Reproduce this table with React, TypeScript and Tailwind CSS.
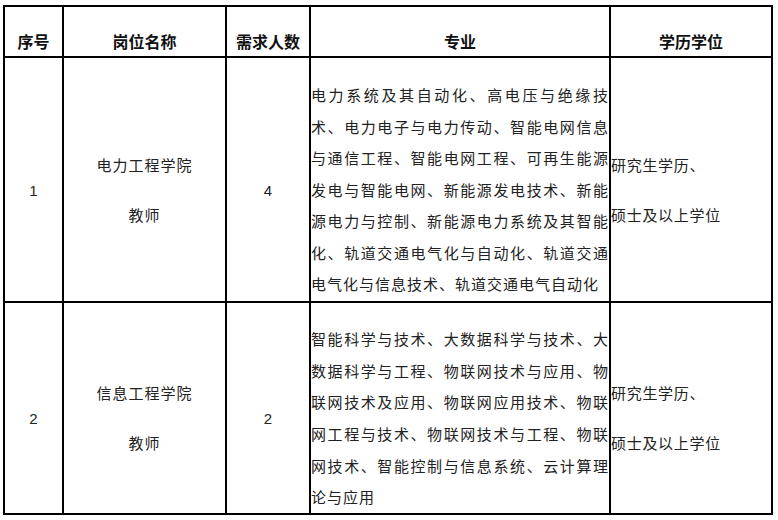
import { Fragment } from "react";

const FONT = "font-['Liberation_Sans','Noto_Sans_CJK_SC',sans-serif]";

const headers = ["序号", "岗位名称", "需求人数", "专业", "学历学位"];

const rows = [
  {
    no: "1",
    dept: "电力工程学院",
    count: "4",
    major: [
      "电力系统及其自动化、高电压与绝缘技",
      "术、电力电子与电力传动、智能电网信息",
      "与通信工程、智能电网工程、可再生能源",
      "发电与智能电网、新能源发电技术、新能",
      "源电力与控制、新能源电力系统及其智能",
      "化、轨道交通电气化与自动化、轨道交通",
      "电气化与信息技术、轨道交通电气自动化",
    ],
  },
  {
    no: "2",
    dept: "信息工程学院",
    count: "2",
    major: [
      "智能科学与技术、大数据科学与技术、大",
      "数据科学与工程、物联网技术与应用、物",
      "联网技术及应用、物联网应用技术、物联",
      "网工程与技术、物联网技术与工程、物联",
      "网技术、智能控制与信息系统、云计算理",
      "论与应用",
    ],
  },
];

const cell = "bg-white pt-[22px] flex flex-col justify-center";

export default function App() {
  return (
    <div className={`min-h-screen bg-white pt-[5px] pl-[3px] ${FONT}`}>
      <div className="grid w-[770px] grid-cols-[57px_161px_82px_298px_160px] grid-rows-[49px_243px_210px] gap-[2px] bg-black p-[2px]">
        {headers.map((h) => (
          <div key={h} className={`${cell} items-center text-[16px] font-bold leading-[26px] text-[#111]`}>
            {h}
          </div>
        ))}
        {rows.map((r) => (
          <Fragment key={r.no}>
            <div className={`${cell} items-center text-[15px] leading-[32px] text-[#222]`}>{r.no}</div>
            <div className={`${cell} items-center gap-[18px] text-[15px] leading-[32px] tracking-[1px] text-[#222]`}>
              <div>{r.dept}</div>
              <div>教师</div>
            </div>
            <div className={`${cell} items-center text-[15px] leading-[32px] text-[#222]`}>{r.count}</div>
            <div className={`${cell} text-[15px] leading-[31.6px] tracking-[1px] text-[#222]`}>
              {r.major.map((line, i) => (
                <div
                  key={i}
                  className={
                    i < r.major.length - 1
                      ? "whitespace-nowrap text-justify [text-align-last:justify]"
                      : "whitespace-nowrap"
                  }
                >
                  {line}
                </div>
              ))}
            </div>
            <div className={`${cell} items-start gap-[18px] text-[15px] leading-[32px] tracking-[0.7px] text-[#222]`}>
              <div>研究生学历、</div>
              <div>硕士及以上学位</div>
            </div>
          </Fragment>
        ))}
      </div>
    </div>
  );
}
